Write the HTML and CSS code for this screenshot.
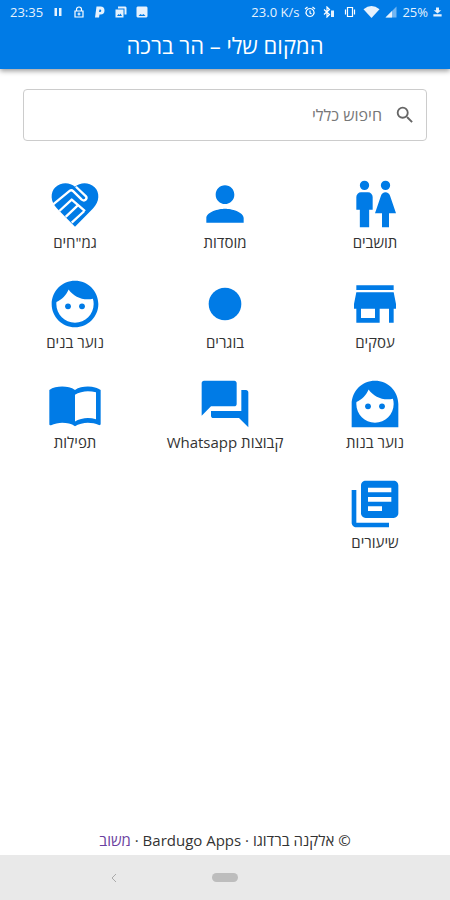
FILE: index.html
```html
<!DOCTYPE html>
<html lang="he" dir="rtl">

<head>
    <meta charset="utf-8" />
    <meta name="viewport" content="width=device-width, initial-scale=1" />
    <title>המקום שלי – הר ברכה</title>
    <link rel="stylesheet" href="styles.css">
</head>

<body>
    <header class="head">
        <div class="status" dir="ltr">
            <div class="status_left">
                <span>23:35</span>
                <svg viewBox="0 0 24 24"><path d="M5 4h5v16H5zM14 4h5v16h-5z"/></svg>
                <svg viewBox="0 0 24 24"><path d="M4 10h16v12H4zM7 10V7a5 5 0 0 1 10 0v3M12 13v6M9 16h6" fill="none" stroke="#fff" stroke-width="2.4"/></svg>
                <svg viewBox="0 0 24 24"><path d="M5 1h8a8 8 0 0 1 0 16h-2l-1 6H2zM11 7l-1 5h2a2.500 2.500 0 0 0 0-5z" fill-rule="evenodd"/></svg>
                <svg viewBox="0 0 24 24"><path d="M6 1h15l2 2v14h-4V5H6zM1 7h16v16H1zM4 20h10l-3-5-2 3-2-2z" fill-rule="evenodd"/></svg>
                <svg viewBox="0 0 24 24"><path d="M3 1h18l2 2v18l-2 2H3l-2-2V3zM5 20h14l-4-4-3 2-3-2z" fill-rule="evenodd"/></svg>
            </div>
            <div class="status_right">
                <span>23.0 K/s</span>
                <svg viewBox="0 0 24 24"><path d="M12 5a8 8 0 1 0 .1 0M12 9v5l3 2M2 6l5-4M22 6l-5-4" fill="none" stroke="#fff" stroke-width="2.400"/></svg>
                <svg class="wide" viewBox="0 0 24 24"><path d="M2 7l11 10-5 5V2l5 5L2 17" fill="none" stroke="#fff" stroke-width="2.400"/><path d="M16 9h6v13h-6z"/></svg>
                <svg class="wide" viewBox="0 0 24 24"><path d="M7 3h10v18H7zM3 7v10M21 7v10" fill="none" stroke="#fff" stroke-width="2.400"/></svg>
                <svg class="wifi" viewBox="0 0 24 18"><path d="M0 5Q12-5 24 5L12 18z"/></svg>
                <svg viewBox="0 0 24 24"><path d="M1 23L23 1v22z" opacity=".5"/><path d="M1 23L14 10v13z"/></svg>
                <span>25%</span>
                <svg class="small" viewBox="0 0 24 24"><path d="M8 0h8v7h6l-10 9L2 7h6zM1 18h22v6H1z"/></svg>
            </div>
        </div>
        <h1>המקום שלי – הר ברכה</h1>
    </header>

    <main class="page">
        <form class="search">
            <label for="search">
                <svg viewBox="0 0 24 24"><path d="M15.500 14h-.79l-.28-.27A6.470 6.470 0 0 0 16 9.500 6.500 6.500 0 1 0 9.500 16c1.610 0 3.090-.59 4.230-1.570l.27.28v.79l5 4.990L20.490 19l-4.990-5zm-6 0C7.010 14 5 11.990 5 9.500S7.010 5 9.500 5 14 7.010 14 9.500 11.990 14 9.500 14z"/></svg>
            </label>
            <input type="text" id="search" placeholder="חיפוש כללי" aria-label="חיפוש כללי">
        </form>

        <nav class="menu">
            <a href="#">
                <svg viewBox="0 0 24 24"><path d="M7.500 2a2 2 0 1 1 0 4 2 2 0 0 1 0-4M6 7h3a2 2 0 0 1 2 2v5.500H9.500V22h-4v-7.500H4V9a2 2 0 0 1 2-2M16.500 2a2 2 0 1 1 0 4 2 2 0 0 1 0-4M15 22v-6h-3l2.590-7.590C14.840 7.590 15.600 7 16.500 7s1.660.59 1.910 1.410L21 16h-3v6z"/></svg>
                תושבים
            </a>
            <a href="#">
                <svg viewBox="0 0 24 24"><path d="M12 12c2.210 0 4-1.790 4-4s-1.790-4-4-4-4 1.790-4 4 1.790 4 4 4zm0 2c-2.670 0-8 1.340-8 4v2h16v-2c0-2.660-5.330-4-8-4z"/></svg>
                מוסדות
            </a>
            <a href="#">
                <svg viewBox="0 0 24 24">
                    <path d="M12 21.700L4.300 13.900C1.400 11 1.300 7 3.600 4.800 6 2.500 9.800 2.600 12 4.600c2.200-2 6-2.100 8.400.2 2.300 2.200 2.200 6.200-.7 9.100z"/>
                    <path class="hands" d="M2.500 12.300l7.200-5.900c.5-.4 1-.4 1.500.1l3.700 3.600c1.300 1 2.600-.4 1.700-1.500L12.400 4.600M5.300 15l5.300-4.900 5.700 5M8 17.500l5.200-4.900M10.600 20l5.300-4.900"/>
                </svg>
                גמ"חים
            </a>
            <a href="#">
                <svg viewBox="0 0 24 24"><path d="M20 4H4v2h16V4zm1 10v-2l-1-5H4l-1 5v2h1v6h10v-6h4v6h2v-6h1zm-9 4H6v-4h6v4z"/></svg>
                עסקים
            </a>
            <a href="#">
                <svg viewBox="0 0 24 24"><circle cx="12" cy="12" r="7"/></svg>
                בוגרים
            </a>
            <a href="#">
                <svg viewBox="0 0 24 24"><circle cx="9" cy="13" r="1.250"/><circle cx="15" cy="13" r="1.250"/><path d="M12 2C6.480 2 2 6.480 2 12s4.480 10 10 10 10-4.480 10-10S17.520 2 12 2zm0 18c-4.410 0-8-3.590-8-8 0-.29.02-.58.05-.86 2.360-1.050 4.230-2.980 5.210-5.370C11.070 8.330 14.050 10 17.420 10c.78 0 1.530-.09 2.250-.26.21.71.33 1.470.33 2.260 0 4.410-3.590 8-8 8z"/></svg>
                נוער בנים
            </a>
            <a href="#">
                <svg viewBox="0 0 24 24"><circle cx="9" cy="13" r="1.250"/><circle cx="15" cy="13" r="1.250"/><path d="M12 2C6.480 2 2 6.480 2 12v10h20V12c0-5.520-4.480-10-10-10zm0 18c-4.410 0-8-3.590-8-8 0-.29.02-.58.05-.86 2.360-1.050 4.230-2.980 5.210-5.370C11.070 8.330 14.050 10 17.420 10c.78 0 1.530-.09 2.250-.26.21.71.33 1.470.33 2.260 0 4.410-3.590 8-8 8z"/></svg>
                נוער בנות
            </a>
            <a href="#">
                <svg viewBox="0 0 24 24"><path d="M21 6h-2v9H6v2c0 .55.45 1 1 1h11l4 4V7c0-.55-.45-1-1-1zm-4 6V3c0-.55-.45-1-1-1H3c-.55 0-1 .45-1 1v14l4-4h10c.55 0 1-.45 1-1z"/></svg>
                קבוצות Whatsapp
            </a>
            <a href="#">
                <svg viewBox="0 0 24 24"><path d="M21 5c-1.110-.35-2.330-.5-3.500-.5-1.950 0-4.050.4-5.500 1.500-1.450-1.100-3.550-1.500-5.500-1.500S2.450 4.900 1 6v14.650c0 .25.25.5.5.5.1 0 .15-.05.25-.05C3.100 20.450 5.050 20 6.500 20c1.950 0 4.050.4 5.500 1.500 1.350-.85 3.800-1.500 5.500-1.500 1.650 0 3.350.3 4.750 1.050.1.05.15.05.25.05.25 0 .5-.25.5-.5V6c-.6-.45-1.250-.75-2-1zm0 13.500c-1.100-.35-2.300-.5-3.500-.5-1.700 0-4.150.65-5.500 1.500V8c1.350-.85 3.800-1.500 5.500-1.500 1.200 0 2.400.15 3.500.5v11.500z"/></svg>
                תפילות
            </a>
            <a href="#">
                <svg viewBox="0 0 24 24"><path d="M4 6H2v14c0 1.100.9 2 2 2h14v-2H4V6zm16-4H8c-1.100 0-2 .9-2 2v12c0 1.100.9 2 2 2h12c1.100 0 2-.9 2-2V4c0-1.100-.9-2-2-2zm-1 9H9V9h10v2zm-4 4H9v-2h6v2zm4-8H9V5h10v2z"/></svg>
                שיעורים
            </a>
        </nav>
    </main>

    <footer class="foot">© אלקנה ברדוגו · <span dir="ltr">Bardugo Apps</span> · <a href="#">משוב</a></footer>

    <div class="navbar" dir="ltr">
        <button type="button" class="back" aria-label="חזרה">
            <svg viewBox="0 0 12 12"><path d="M8 2L4 6l4 4"/></svg>
        </button>
        <button type="button" class="home" aria-label="בית"></button>
    </div>
</body>

</html>
```
FILE: styles.css
```css
* {
    margin: 0;
    padding: 0;
    box-sizing: border-box;
}

body {
    display: flex;
    flex-direction: column;
    min-height: 100vh;
    background: #fff;
    color: #333;
    font: 15px/20px "Open Sans", "Noto Sans", "DejaVu Sans", sans-serif;
}

a {
    color: inherit;
    text-decoration: none;
}

svg {
    display: block;
    fill: currentColor;
}

.head {
    height: 69px;
    background: #007be6;
    color: #fff;
    box-shadow: 0 2px 5px rgba(0, 0, 0, 0.4);
}

.head h1 {
    font-size: 22px;
    font-weight: 500;
    line-height: 42px;
    text-align: center;
}

.status {
    display: flex;
    justify-content: space-between;
    height: 24px;
    padding: 0 8px 0 10px;
    font-size: 13px;
    color: #e6f2fd;
}

.status_left,
.status_right {
    display: flex;
    align-items: center;
}

.status_left {
    gap: 9px;
}

.status_right {
    gap: 5px;
}

.status svg {
    width: 12px;
    height: 12px;
}

.status .wide {
    width: 16px;
}

.status .wifi {
    width: 17px;
}

.status .small {
    width: 9px;
}

.page {
    flex: 1;
}

.search {
    display: flex;
    align-items: center;
    height: 52px;
    margin: 20px 23px 0;
    padding: 0 10px;
    border: 1px solid #ccc;
    border-radius: 4px;
}

.search svg {
    width: 22px;
    height: 22px;
    color: #666;
}

.search input {
    flex: 1;
    min-width: 0;
    height: 100%;
    padding: 0 12px;
    border: none;
    outline: none;
    background: none;
    font: inherit;
    font-size: 16px;
}

.search input::placeholder {
    color: #777;
    opacity: 1;
}

.menu {
    display: grid;
    grid-template-columns: repeat(3, 1fr);
    row-gap: 24px;
    margin-top: 35px;
}

.menu a {
    display: flex;
    flex-direction: column;
    align-items: center;
    white-space: nowrap;
}

.menu svg {
    width: 56px;
    height: 56px;
    color: #007be6;
}

.menu .hands {
    fill: none;
    stroke: #fff;
    stroke-width: 1;
    stroke-linejoin: round;
}

.foot {
    padding: 5px 0;
    text-align: center;
}

.foot a {
    color: #6b3fa0;
}

.navbar {
    display: grid;
    grid-template-columns: 1fr auto 1fr;
    align-items: center;
    height: 45px;
    background: #e9e9e9;
}

.navbar button {
    border: none;
    background: none;
}

.navbar .back {
    justify-self: center;
    padding-left: 16px;
}

.navbar svg {
    width: 12px;
    height: 12px;
    fill: none;
    stroke: #aaa;
    stroke-width: 1;
}

.navbar .home {
    width: 26px;
    height: 9px;
    border-radius: 5px;
    background: #bdbdbd;
}
```
